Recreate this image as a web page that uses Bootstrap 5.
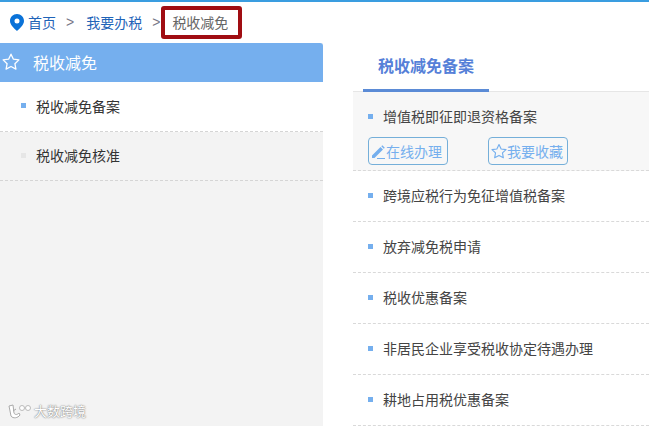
<!DOCTYPE html>
<html lang="zh">
<head>
<meta charset="utf-8">
<title>税收减免</title>
<link href="https://cdn.jsdelivr.net/npm/bootstrap@5.3.0/dist/css/bootstrap.min.css" rel="stylesheet">
<style>
html,body{height:100%;}
body{width:649px;height:426px;overflow:hidden;font-family:"Noto Sans CJK SC","Liberation Sans",sans-serif;font-size:14px;line-height:20px;color:#444;background:#fff;position:relative;}
.topline{height:2px;background:#3a9de0;}
.crumbs{height:41px;padding-left:10px;padding-bottom:2px;}
.crumbs a{color:#1f64b8;text-decoration:none;}
.crumbs .sep{color:#778;font-family:"Liberation Sans",sans-serif;}
.sep1{margin:0 12px 0 10px;}
.sep2{margin:0 1px 0 10px;}
.pin{width:14px;height:17px;margin-right:4px;margin-top:2px;}
.current{border:4px solid #a00d12;border-radius:3px;height:33px;width:81px;color:#666;padding-left:7px;margin-top:1px;}
.mainrow{height:383px;}
.side{width:323px;background:#f3f3f3;}
.sidehead{height:39px;background:#75afee;color:#fff;font-size:16px;border-radius:0 3px 0 0;padding-left:2px;padding-bottom:2px;}
.sidehead svg{margin-right:13px;}
.sideitem{height:49px;border-bottom:1px dashed #d5d5d5;padding-left:21px;padding-bottom:2px;color:#333;}
.sideitem.on{background:#fff;height:50px;}
.dot{width:5px;height:5px;background:#75afee;margin-right:10px;flex:none;}
.sideitem:not(.on) .dot{background:#e6e6e6;}
.pane{margin-left:30px;width:296px;}
.tabbar{height:49px;border-bottom:1px solid #e6e6e6;}
.tabitem{width:126px;margin-left:10px;height:49px;border-bottom:3px solid #5b8bd6;color:#5580d8;font-size:16px;font-weight:700;padding-top:12px;text-align:center;position:relative;z-index:1;}
.entry{height:51px;border-bottom:1px dashed #d9d9d9;padding-left:15px;padding-bottom:2px;color:#444;font-size:14px;}
.entry .dot{margin-right:10px;}
.entry.open{height:79px;background:#f7f7f7;padding-top:14px;padding-bottom:0;display:block!important;}
.entry.open .hd{height:20px;}
.acts{margin-top:11px;gap:40px;}
.act{width:80px;height:28px;border:1px solid #75afd9;border-radius:4px;color:#75afee;padding:0 0 0 2px;background:transparent;font-size:14px;line-height:24px;white-space:nowrap;}
.act span{margin-top:-1px;}
.mark-logo{position:absolute;left:7px;bottom:7px;color:#fff;font-size:13px;line-height:16px;text-shadow:0 0 2px #888,0 0 1px #777;gap:3px;}
</style>
</head>
<body>
<div class="topline"></div>
<nav class="crumbs d-flex align-items-center">
  <svg class="pin" viewBox="0 0 14 17"><path fill="#0a72d8" fill-rule="evenodd" d="M7 0C3.100 0 0 3 0 6.900c0 3.800 4.300 7.300 7 10.100 2.700-2.800 7-6.300 7-10.100C14 3 10.900 0 7 0zm0 4.400a2.500 2.500 0 1 1 0 5 2.500 2.500 0 0 1 0-5z"/></svg>
  <a href="#">首页</a><span class="sep sep1">&gt;</span><a href="#">我要办税</a><span class="sep sep2">&gt;</span>
  <div class="current d-flex align-items-center">税收减免</div>
</nav>
<div class="mainrow d-flex">
  <aside class="side flex-none">
    <div class="sidehead d-flex align-items-center">
      <svg width="18" height="17" viewBox="0 0 18 17"><path fill="none" stroke="#fff" stroke-width="1.300" stroke-linejoin="round" d="M9 1.200l2.400 5 5.500.7-4 3.800 1 5.400L9 13.500l-4.900 2.600 1-5.400-4-3.800 5.500-.7z"/></svg>
      <span>税收减免</span>
    </div>
    <div class="sideitem on d-flex align-items-center"><i class="dot"></i><span>税收减免备案</span></div>
    <div class="sideitem d-flex align-items-center"><i class="dot"></i><span>税收减免核准</span></div>
  </aside>
  <section class="pane">
    <div class="tabbar d-flex"><div class="tabitem">税收减免备案</div></div>
    <div class="entry open">
      <div class="hd d-flex align-items-center"><i class="dot"></i><span>增值税即征即退资格备案</span></div>
      <div class="acts d-flex">
        <button type="button" class="act btn d-flex align-items-center">
          <svg width="15" height="15" viewBox="0 0 15 15"><path fill="#75afee" d="M1 11.500L9.500 3l2.500 2.500L3.500 14H1zM10.300 2.200l1-1 2.500 2.500-1 1z"/><path stroke="#75afee" d="M6 14.500h8"/></svg><span>在线办理</span>
        </button>
        <button type="button" class="act btn d-flex align-items-center">
          <svg width="16" height="16" viewBox="0 0 18 17"><path fill="none" stroke="#75afee" stroke-width="1.300" stroke-linejoin="round" d="M9 1.200l2.400 5 5.500.7-4 3.800 1 5.400L9 13.500l-4.900 2.600 1-5.400-4-3.800 5.500-.7z"/></svg><span>我要收藏</span>
        </button>
      </div>
    </div>
    <div class="entry d-flex align-items-center"><i class="dot"></i><span>跨境应税行为免征增值税备案</span></div>
    <div class="entry d-flex align-items-center"><i class="dot"></i><span>放弃减免税申请</span></div>
    <div class="entry d-flex align-items-center"><i class="dot"></i><span>税收优惠备案</span></div>
    <div class="entry d-flex align-items-center"><i class="dot"></i><span>非居民企业享受税收协定待遇办理</span></div>
    <div class="entry d-flex align-items-center"><i class="dot"></i><span>耕地占用税优惠备案</span></div>
  </section>
</div>
<div class="mark-logo d-flex align-items-center">
  <svg width="24" height="15" viewBox="0 0 24 15"><path fill="#fff" stroke="#aaa" stroke-width="1" d="M2 2l4-1 1 8c1 2 3 2 5 0l1 2c-2 3-7 4-9 1zM9 5l-3 2"/><circle cx="15" cy="4" r="2.500" fill="#fff" stroke="#bbb"/><circle cx="21" cy="4" r="2.500" fill="#fff" stroke="#bbb"/></svg>
  <span>大数跨境</span>
</div>
<script src="https://cdn.jsdelivr.net/npm/bootstrap@5.3.0/dist/js/bootstrap.bundle.min.js"></script>
</body>
</html>
